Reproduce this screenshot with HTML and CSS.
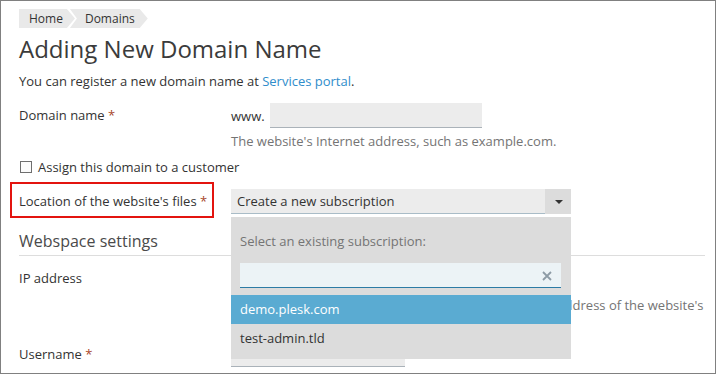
FILE: index.html
```html
<!DOCTYPE html>
<html lang="en">
   <head>
      <meta charset="UTF-8">
      <meta name="viewport" content="width=device-width, initial-scale=1.0">
      <title>Adding New Domain Name</title>
      <link rel="stylesheet" href="styles.css">
   </head>

   <body>
      <div class="page">

         <!-----------------BREADCRUMBS---------------->
         <div class="breadcrumbs">
            <a href="#" class="crumb crumb-first">Home</a>
            <a href="#" class="crumb">Domains</a>
         </div>

         <h1 class="page-title">Adding New Domain Name</h1>
         <p class="intro">You can register a new domain name at <a href="#">Services portal</a>.</p>

         <form class="form">

            <!-----------------DOMAIN NAME---------------->
            <div class="form-row">
               <div class="form-label">Domain name <span class="required">*</span></div>
               <div class="form-field">
                  <div class="domain-input">
                     <span class="prefix">www.</span>
                     <input type="text" class="text-input domain-field">
                  </div>
                  <div class="hint">The website's Internet address, such as example.com.</div>
               </div>
            </div>

            <label class="checkbox-row">
               <input type="checkbox" class="checkbox">
               <span>Assign this domain to a customer</span>
            </label>

            <!---------------FILES LOCATION--------------->
            <div class="form-row row-location">
               <div class="form-label">
                  <span class="marked">Location of the website's files <span class="required">*</span></span>
               </div>
               <div class="form-field">
                  <div class="select-box">
                     <div class="select-value">Create a new subscription</div>
                     <div class="select-button"><span class="caret"></span></div>

                     <div class="dropdown">
                        <div class="dropdown-label">Select an existing subscription:</div>
                        <div class="dropdown-search">
                           <input type="text" class="search-field">
                           <svg class="search-clear" width="10" height="10" viewBox="0 0 10 10">
                              <path d="M1 1L9 9M9 1L1 9" stroke="#8d9ba5" stroke-width="1.8" fill="none"/>
                           </svg>
                        </div>
                        <ul class="dropdown-list">
                           <li class="active">demo.plesk.com</li>
                           <li>test-admin.tld</li>
                        </ul>
                     </div>
                  </div>
               </div>
            </div>

            <!-------------WEBSPACE SETTINGS-------------->
            <h2 class="section-title">Webspace settings</h2>

            <div class="form-row row-ip">
               <div class="form-label">IP address</div>
               <div class="form-field">
                  <div class="select-box small-select">
                     <div class="select-value">IPv4: shared</div>
                  </div>
                  <div class="hint">Select the IP address that will be used as the public IP address of the website's
                     domain name.</div>
               </div>
            </div>

            <div class="form-row row-user">
               <div class="form-label">Username <span class="required">*</span></div>
               <div class="form-field">
                  <input type="text" class="text-input user-field">
               </div>
            </div>
         </form>
      </div>
   </body>
</html>
```

FILE: styles.css
```css
*{
   box-sizing: border-box;
   margin: 0;
   padding: 0;
}

body{
   font-family: "Open Sans", "Liberation Sans", sans-serif;
   font-size: 13px;
   line-height: 18px;
   color: #333;
   background: #fff;
}

.page{
   width: 716px;
   height: 374px;
   border: 1px solid #808080;
   padding: 8px 10px 0 18px;
   overflow: hidden;
}

a{
   color: #2f8dcb;
   text-decoration: none;
}

/*****************BREADCRUMBS*****************/
.breadcrumbs{
   display: flex;
   height: 19px;
}

.crumb{
   display: block;
   height: 19px;
   line-height: 19px;
   font-size: 12px;
   color: #333;
   background: #e9e9e9;
   padding: 0 13px 0 15px;
   margin-left: -5px;
   clip-path: polygon(0 0, calc(100% - 8px) 0, 100% 50%, calc(100% - 8px) 100%, 0 100%, 7px 50%);
}

.crumb-first{
   margin-left: 0;
   padding-left: 10px;
   padding-right: 12px;
   clip-path: polygon(0 0, calc(100% - 8px) 0, 100% 50%, calc(100% - 8px) 100%, 0 100%);
}

/*******************HEADER*******************/
.page-title{
   font-size: 24px;
   font-weight: 400;
   line-height: 32px;
   color: #3b3b3b;
   margin-top: 5px;
}

.intro{
   margin-top: 7px;
}

/********************FORM********************/
.form-row{
   display: grid;
   grid-template-columns: 212px 1fr;
   margin-top: 13px;
}

.form-label{
   line-height: 25px;
}

.required{
   color: #a8472a;
}

.domain-input{
   display: flex;
   align-items: center;
   gap: 5px;
   height: 25px;
}

.text-input{
   height: 25px;
   border: 0;
   border-bottom: 1px solid #aab2b9;
   background: #ececec;
   font: inherit;
   outline: none;
}

.domain-field{
   width: 212px;
}

.hint{
   color: #747474;
   margin-top: 4px;
}

.checkbox-row{
   display: flex;
   align-items: center;
   gap: 6px;
   margin-top: 8px;
   padding-left: 1px;
}

.checkbox{
   appearance: none;
   width: 12px;
   height: 12px;
   border: 1px solid #6e6e6e;
   background: #fbfbfb;
}

.row-location{
   margin-top: 13px;
}

.marked{
   position: relative;
}

.marked::after{
   content: "";
   position: absolute;
   left: -9px;
   top: -10px;
   width: 200px;
   height: 32px;
   border: 2px solid #e3140f;
}

/*******************SELECT*******************/
.select-box{
   position: relative;
   display: flex;
   width: 340px;
   height: 25px;
}

.select-value{
   flex: 1;
   line-height: 24px;
   padding-left: 6px;
   background: #ececec;
   border-bottom: 1px solid #a9bcc7;
}

.select-button{
   width: 26px;
   background: #dcdcdc;
   display: flex;
   align-items: center;
   justify-content: center;
}

.caret{
   width: 0;
   height: 0;
   border-left: 4px solid transparent;
   border-right: 4px solid transparent;
   border-top: 4px solid #333;
   margin-left: 1px;
}

/******************DROPDOWN******************/
.dropdown{
   position: absolute;
   top: 28px;
   left: 0;
   width: 340px;
   background: #dcdcdc;
   padding-bottom: 6px;
   z-index: 2;
}

.dropdown-label{
   color: #747474;
   margin: 15px 9px 0;
}

.dropdown-search{
   position: relative;
   margin: 13px 10px 0 9px;
}

.search-field{
   display: block;
   width: 100%;
   height: 25px;
   border: 0;
   border-bottom: 1px solid #2c7ba5;
   background: #ecf3f6;
   outline: none;
}

.search-clear{
   position: absolute;
   right: 9px;
   top: 8px;
}

.dropdown-list{
   list-style: none;
   margin-top: 7px;
}

.dropdown-list li{
   height: 29px;
   line-height: 29px;
   padding: 0 9px;
}

.dropdown-list .active{
   background: #5aabd2;
   color: #fff;
}

/*****************WEBSPACE*******************/
.section-title{
   font-size: 16px;
   font-weight: 400;
   line-height: 22px;
   color: #4a4a4a;
   margin-top: 16px;
   padding-bottom: 3px;
   border-bottom: 1px solid #dddddd;
}

.row-ip{
   margin-top: 10px;
}

.small-select{
   width: 174px;
}

.row-ip .hint{
   margin-top: 5px;
   width: 480px;
}

.row-user{
   margin-top: 10px;
}

.user-field{
   width: 174px;
}
```
